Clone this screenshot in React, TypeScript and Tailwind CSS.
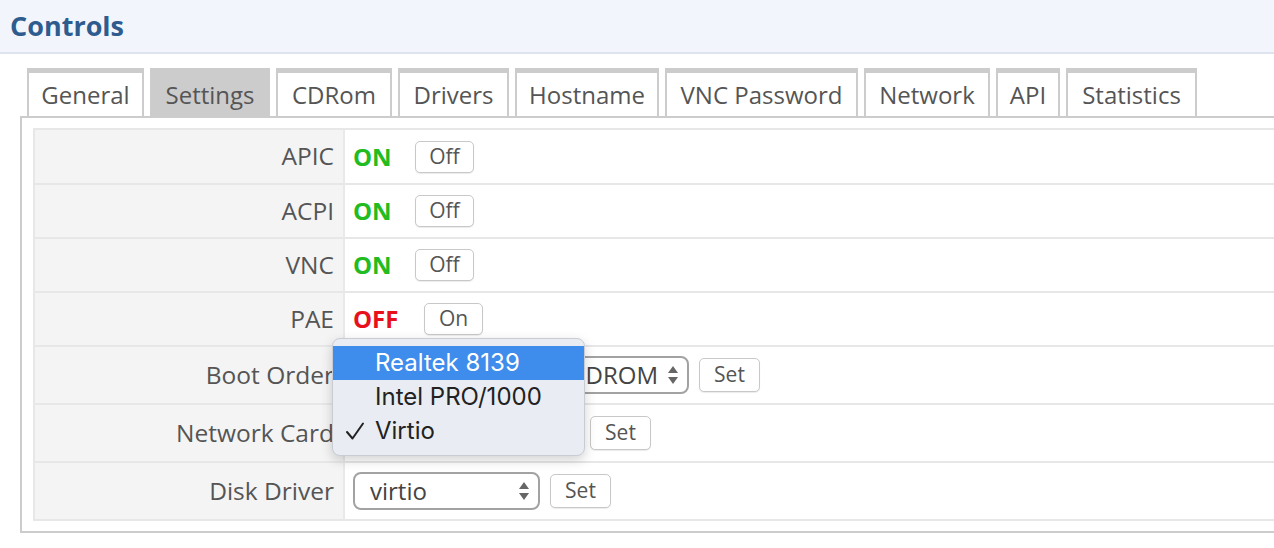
import React from "react";

const tabs = [
  { name: "General", w: "w-[117px]" },
  { name: "Settings", w: "w-[120px]", active: true },
  { name: "CDRom", w: "w-[116px]" },
  { name: "Drivers", w: "w-[111px]" },
  { name: "Hostname", w: "w-[144px]" },
  { name: "VNC Password", w: "w-[193px]" },
  { name: "Network", w: "w-[126px]" },
  { name: "API", w: "w-[64px]" },
  { name: "Statistics", w: "w-[131px]" },
];

function Btn({ children, w }: { children: React.ReactNode; w: string }) {
  return (
    <div
      className={`${w} h-[32px] flex items-center justify-center rounded-[5px] border border-[#c8c8c8] bg-white text-[21px] text-[#555] shadow-[0_1px_1px_rgba(0,0,0,0.08)]`}
    >
      {children}
    </div>
  );
}

function SetBtn() {
  return (
    <div className="w-[61px] h-[34px] flex items-center justify-center rounded-[5px] border border-[#c8c8c8] bg-white text-[21px] text-[#555] shadow-[0_1px_1px_rgba(0,0,0,0.08)]">
      Set
    </div>
  );
}

function Arrows() {
  return (
    <svg width="12" height="20" viewBox="0 0 12 20" className="shrink-0">
      <path d="M6 1 L11 8 H1 Z" fill="#666" />
      <path d="M6 19 L11 12 H1 Z" fill="#666" />
    </svg>
  );
}

function Select({ w, text, right }: { w: string; text: string; right?: boolean }) {
  return (
    <div
      className={`${w} h-[38px] flex items-center rounded-[8px] border-2 border-[#a2a2a2] bg-white pl-[15px] pr-[8px] text-[24px] text-[#444] ${right ? "justify-end gap-[9px]" : "justify-between"}`}
    >
      <span className="whitespace-nowrap overflow-hidden">{text}</span>
      <Arrows />
    </div>
  );
}

function Row({ label, h, children }: { label: string; h: string; children: React.ReactNode }) {
  return (
    <div className={`flex ${h} border-b-2 border-[#e7e7e7]`}>
      <div className="w-[310px] shrink-0 bg-[#f4f4f4] border-r-2 border-[#e9e9e9] flex items-center justify-end pr-[9px] text-[24.5px] text-[#555]">
        {label}
      </div>
      <div className="flex-1 flex items-center pl-[8px] bg-white">{children}</div>
    </div>
  );
}

function OnOff({ on }: { on: boolean }) {
  return on ? (
    <div className="flex items-center">
      <span className="w-[62px] font-bold text-[24px] text-[#22bb22]">ON</span>
      <Btn w="w-[59px]">Off</Btn>
    </div>
  ) : (
    <div className="flex items-center">
      <span className="w-[71px] font-bold text-[24px] text-[#e8101c]">OFF</span>
      <Btn w="w-[59px]">On</Btn>
    </div>
  );
}

export default function App() {
  return (
    <div
      className="relative w-[1274px] h-[548px] overflow-hidden bg-white"
      style={{ fontFamily: '"Open Sans", "Liberation Sans", sans-serif' }}
    >
      <div className="h-[54px] bg-[#f2f6fc] border-b-2 border-[#dde4ee] flex items-center pl-[10px]">
        <h1 className="text-[27px] font-bold text-[#2f5c8f] leading-none mt-[-1px]">Controls</h1>
      </div>

      <div className="flex gap-[6px] pl-[27px] mt-[14px] h-[48px]">
        {tabs.map((t) => (
          <div
            key={t.name}
            className={`${t.w} h-[48px] border-t-[5px] border-x-2 border-[#cccccc] flex items-center justify-center text-[24px] text-[#555] ${
              t.active ? "bg-[#cccccc]" : "bg-white"
            }`}
          >
            <span>{t.name}</span>
          </div>
        ))}
      </div>

      <div className="ml-[20px] border-2 border-r-0 border-[#cccccc] pt-[10px] pl-[11px] pb-[10px]">
        <div className="border-t-2 border-l-2 border-[#e7e7e7]">
          <Row label="APIC" h="h-[55px]">
            <OnOff on />
          </Row>
          <Row label="ACPI" h="h-[54px]">
            <OnOff on />
          </Row>
          <Row label="VNC" h="h-[54px]">
            <OnOff on />
          </Row>
          <Row label="PAE" h="h-[54px]">
            <OnOff on={false} />
          </Row>
          <Row label="Boot Order" h="h-[58px]">
            <div className="flex items-center gap-[10px]">
              <Select w="w-[336px]" text="Hard Disk, CDROM" right />
              <SetBtn />
            </div>
          </Row>
          <Row label="Network Card" h="h-[58px]">
            <div className="flex items-center gap-[10px]">
              <Select w="w-[227px]" text="Virtio" />
              <SetBtn />
            </div>
          </Row>
          <Row label="Disk Driver" h="h-[58px]">
            <div className="flex items-center gap-[10px]">
              <Select w="w-[187px]" text="virtio" />
              <SetBtn />
            </div>
          </Row>
        </div>
      </div>

      <div
        className="absolute left-[332px] top-[338px] w-[253px] h-[118px] rounded-[8px] bg-[#e9edf3] border border-[#c9cdd3] shadow-[0_4px_12px_rgba(0,0,0,0.18)] pt-[7px] text-[24px] text-[#222]"
        style={{ fontFamily: 'Inter, "Noto Sans", sans-serif' }}
      >
        <div className="h-[34px] bg-[#3e8ceb] text-white flex items-center pl-[42px]">Realtek 8139</div>
        <div className="h-[34px] flex items-center pl-[42px]">Intel PRO/1000</div>
        <div className="h-[34px] flex items-center pl-[12px]">
          <svg width="20" height="20" viewBox="0 0 20 20" className="mr-[10px] shrink-0">
            <path d="M2 11 L7.5 17.5 L18 2.5" fill="none" stroke="#222" strokeWidth="2" strokeLinecap="round" strokeLinejoin="round" />
          </svg>
          Virtio
        </div>
      </div>
    </div>
  );
}
